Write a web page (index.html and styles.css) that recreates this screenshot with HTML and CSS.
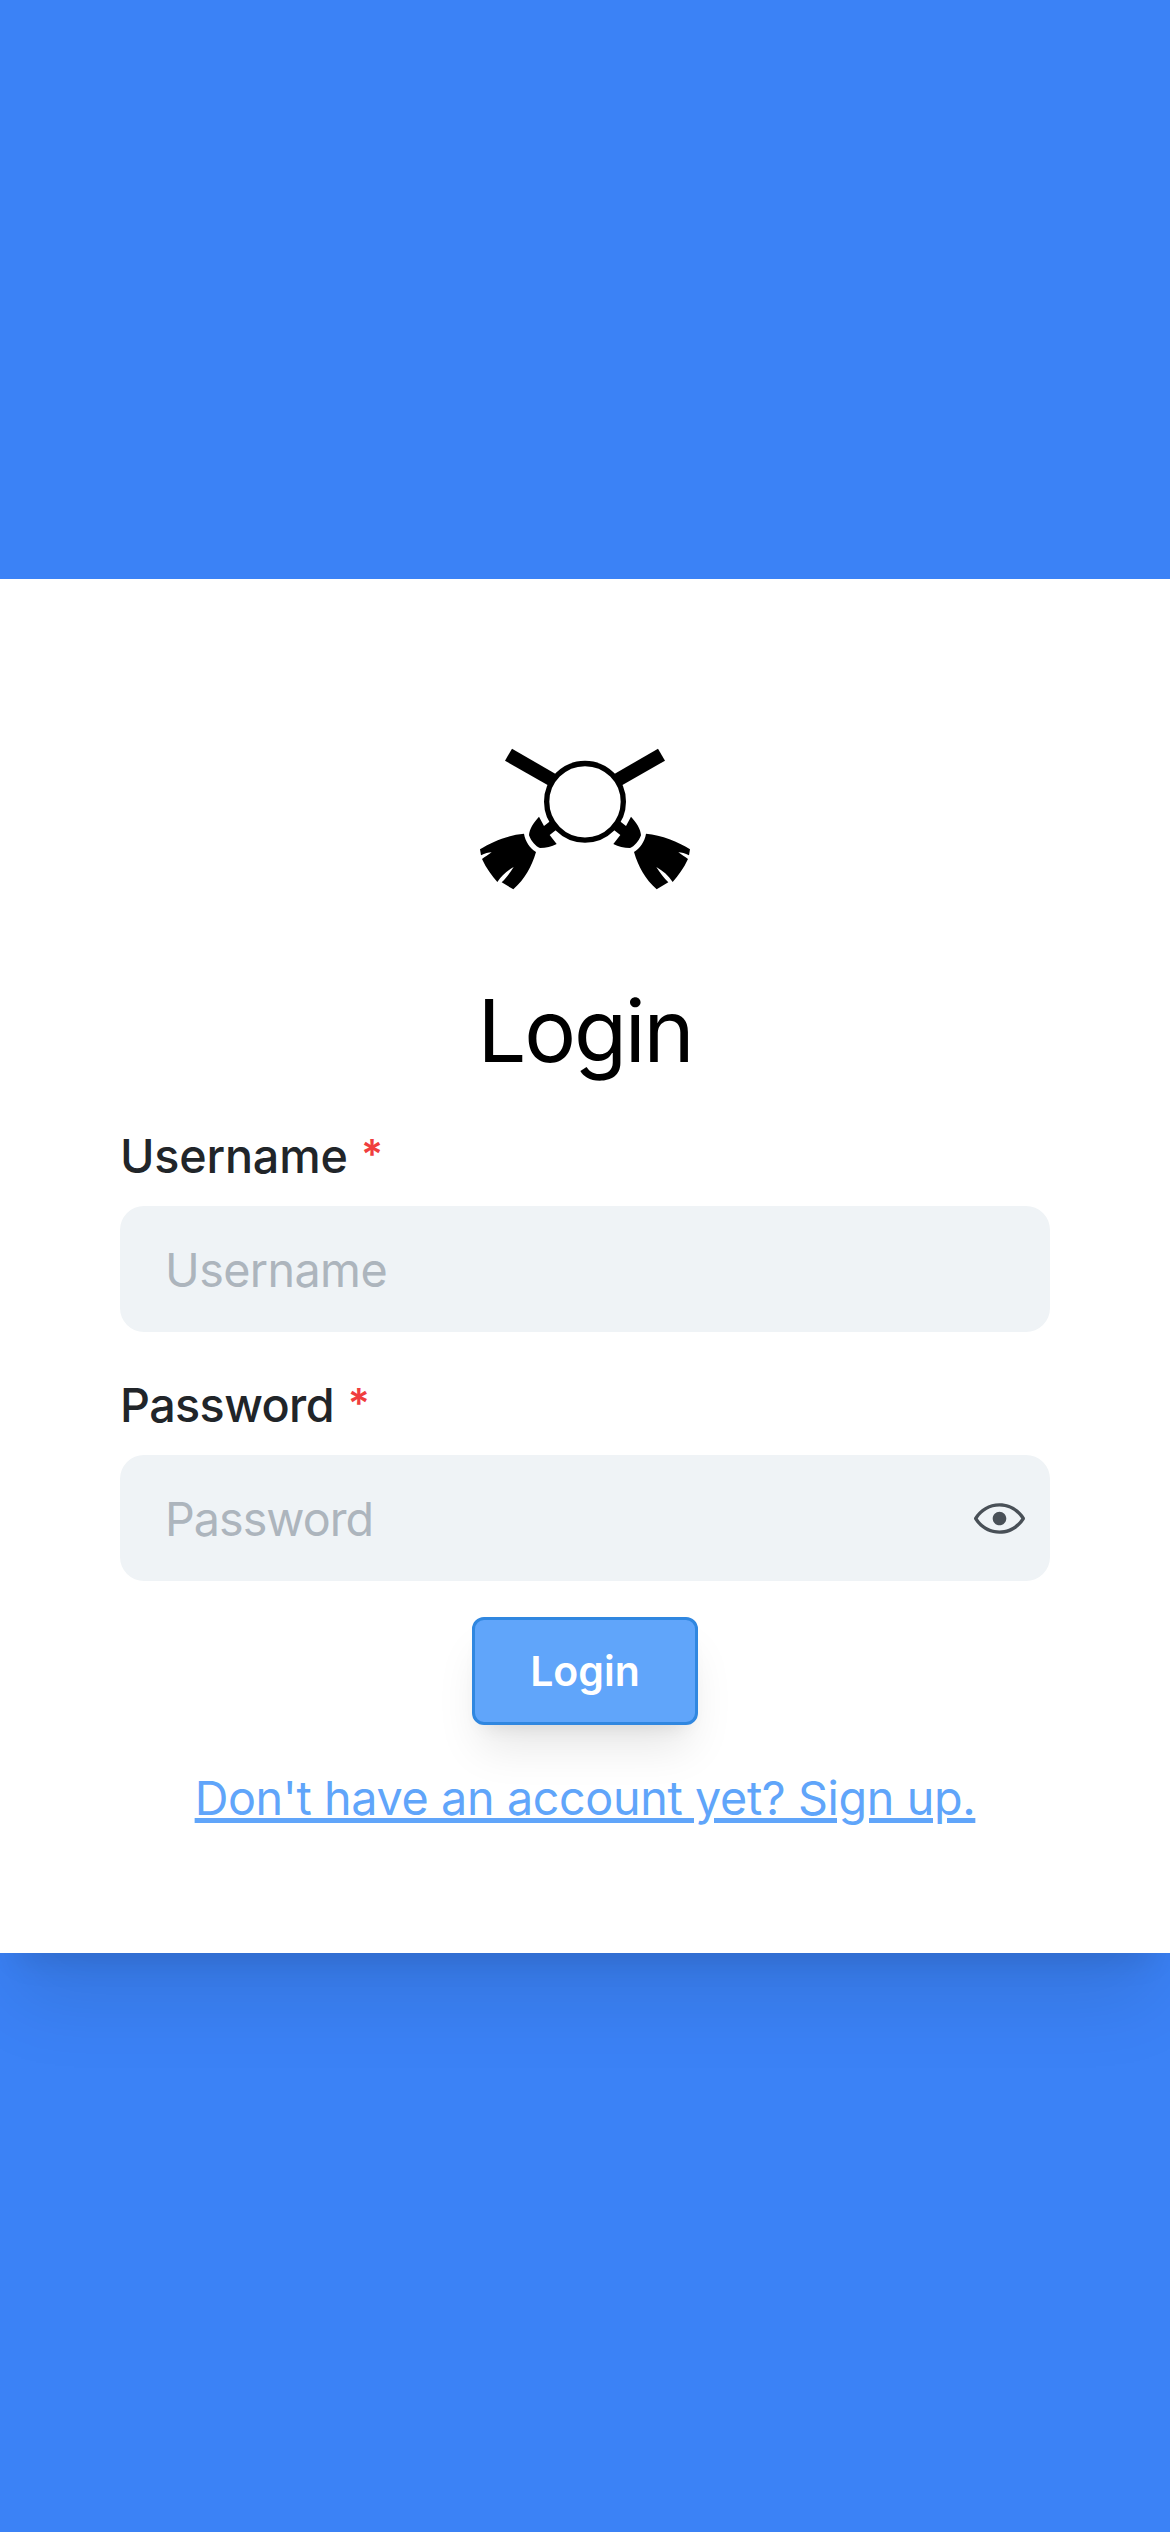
FILE: index.html
```html
<!DOCTYPE html>
<html lang="en">
<head>
<meta charset="utf-8">
<title>Login</title>
<link rel="stylesheet" href="styles.css">
</head>
<body>
<main class="card">
  <svg class="logo" viewBox="0 0 750 510" aria-hidden="true">
    <defs>
      <g id="broom">
        <path d="M156 56L287 132L264 166L135 92Z"/>
        <path d="M237 260C221 278 208 296 207 316C214 335 227 349 240 354C258 354 275 350 290 342L269 315L292 297L272 272L252 288Z"/>
        <path d="M192 311C145 315 95 335 60 358L63 376C75 370 85 367 95 367C85 375 75 380 66 387C79 415 95 437 112 456C125 437 140 423 161 411C150 428 138 445 125 457L160 478C195 447 215 410 228 366C210 355 196 335 192 311Z"/>
      </g>
    </defs>
    <use href="#broom"/>
    <use href="#broom" transform="matrix(-1 0 0 1 750 0)"/>
    <circle cx="375" cy="215.500" r="115" fill="#fff" stroke="#000" stroke-width="16"/>
  </svg>
  <h1 class="title">Login</h1>
  <form class="form">
    <div class="field">
      <label class="label" for="username">Username <span class="required">*</span></label>
      <div class="control"><input class="input" id="username" type="text" placeholder="Username"></div>
    </div>
    <div class="field">
      <label class="label label-password" for="password">Password <span class="required">*</span></label>
      <div class="control">
        <input class="input input-password" id="password" type="password" placeholder="Password">
        <svg class="eye" viewBox="0 0 15 15" aria-hidden="true"><path fill="currentColor" fill-rule="evenodd" d="M7.5 11C4.80285 11 2.52952 9.62184 1.09622 7.50001C2.52952 5.37816 4.80285 4 7.5 4C10.1971 4 12.4705 5.37816 13.9038 7.50001C12.4705 9.62183 10.1971 11 7.5 11ZM7.5 3C4.30786 3 1.65639 4.70638 0.0760002 7.23501C-0.0253338 7.39715 -0.0253334 7.60288 0.0760014 7.76501C1.65639 10.2936 4.30786 12 7.5 12C10.6921 12 13.3436 10.2936 14.924 7.76501C15.0253 7.60288 15.0253 7.39715 14.924 7.23501C13.3436 4.70638 10.6921 3 7.5 3ZM7.5 9.5C8.60457 9.5 9.5 8.60457 9.5 7.5C9.5 6.39543 8.60457 5.5 7.5 5.5C6.39543 5.5 5.5 6.39543 5.5 7.5C5.5 8.60457 6.39543 9.5 7.5 9.5Z"/></svg>
      </div>
    </div>
    <button class="submit" type="button">Login</button>
  </form>
  <a class="signup" href="#">Don't have an account yet? Sign up.</a>
</main>
</body>
</html>
```
FILE: styles.css
```css
* { box-sizing: border-box; }

body {
  margin: 0;
  height: 2532px;
  display: flex;
  flex-direction: column;
  justify-content: center;
  background: #3b82f6;
  font-family: Inter, "Liberation Sans", sans-serif;
  overflow: hidden;
}

.card {
  display: flex;
  flex-direction: column;
  align-items: center;
  height: 1374px;
  padding: 151px 120px 0;
  background: #fff;
  box-shadow: 0 60px 75px -15px rgba(0, 0, 0, .1), 0 24px 30px -18px rgba(0, 0, 0, .1);
}

.logo { width: 250px; height: 170px; flex: none; }

.title {
  margin: 77px 0 0;
  font-size: 86.5px;
  font-weight: 430;
  line-height: 108px;
  letter-spacing: -2.2px;
  color: #000;
}

.form {
  display: flex;
  flex-direction: column;
  align-items: center;
  gap: 36px;
  width: 100%;
  margin-top: 34px;
}

.field { width: 100%; }

.label {
  display: block;
  margin-bottom: 12px;
  font-size: 46.7px;
  font-weight: 500;
  line-height: 75px;
  letter-spacing: -.2px;
  color: #212529;
}

.label-password { letter-spacing: -.6px; }

.required {
  margin-left: 1px;
  font-size: 41px;
  font-weight: 600;
  line-height: 0;
  vertical-align: 4px;
  color: #f03e3e;
}

.label-password .required { margin-left: 2px; }

.control {
  display: flex;
  align-items: center;
  height: 126px;
  padding: 0 25px 0 45px;
  border-radius: 24px;
  background: #eff3f6;
}

.input {
  flex: 1;
  min-width: 0;
  height: 100%;
  padding: 2px 0 0;
  border: 0;
  outline: 0;
  background: transparent;
  font: 400 46.7px Inter, "Liberation Sans", sans-serif;
  letter-spacing: -.6px;
}

.input-password { letter-spacing: -1px; }

.input::placeholder { color: #adb5bd; opacity: 1; }

.eye { width: 51px; height: 51px; color: #495057; }

.submit {
  width: 226px;
  height: 108px;
  padding: 0;
  border: 3px solid #3087e0;
  border-radius: 12px;
  background: #60a5fa;
  color: #fff;
  font: 600 41px Inter, "Liberation Sans", sans-serif;
  box-shadow: 0 30px 45px -9px rgba(0, 0, 0, .1), 0 12px 18px -12px rgba(0, 0, 0, .1);
}

.signup {
  margin-top: 37px;
  font-size: 46.7px;
  line-height: 72px;
  letter-spacing: -.37px;
  white-space: nowrap;
  color: #60a5fa;
  text-decoration: underline;
  text-decoration-thickness: 4.5px;
  text-underline-offset: 3px;
}
```
